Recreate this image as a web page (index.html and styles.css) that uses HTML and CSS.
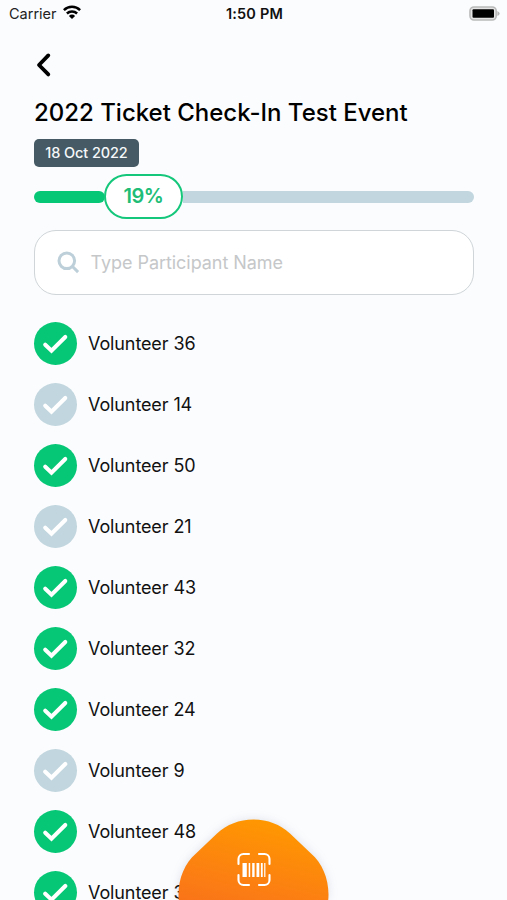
FILE: index.html
```html
<!DOCTYPE html>
<html lang="en">
<head>
<meta charset="utf-8">
<meta name="viewport" content="width=device-width, initial-scale=1">
<title>Ticket Check-In</title>
<link rel="stylesheet" href="styles.css">
</head>
<body>
<svg class="defs" width="0" height="0" aria-hidden="true">
  <symbol id="check" viewBox="0 0 44 44"><path d="M11.5 23.2 17.9 29.3 32 15.4" fill="none" stroke="#fff" stroke-width="4.2" stroke-linecap="round" stroke-linejoin="miter"/></symbol>
</svg>
<div class="screen">
  <header class="status">
    <div class="carrier"><span class="carrier-name">Carrier</span>
      <svg width="18" height="14" viewBox="0 0 18 14" fill="none" stroke="#000" stroke-width="2.5"><path d="M.9 5.1a11.7 11.7 0 0 1 16.2 0"/><path d="M3.9 8.5a7.4 7.4 0 0 1 10.2 0"/><path d="M9 14 5.9 10.9a4.4 4.4 0 0 1 6.2 0z" fill="#000" stroke="none"/></svg>
    </div>
    <span class="time">1:50 PM</span>
    <svg class="battery" width="31" height="15" viewBox="0 0 31 15"><rect x="1" y="1" width="26.2" height="13" rx="4" fill="#e4e4e4" stroke="#b9b9b9" stroke-width="1.6"/><rect x="3.500" y="3.200" width="21.500" height="8.600" rx="1"/><path d="M28.4 5q2.2 1 2.2 2.5t-2.2 2.5z" fill="#b5b5b5"/></svg>
  </header>
  <main class="content">
    <button class="back" aria-label="Back"><svg width="18" height="26" viewBox="0 0 18 26"><path d="M14.300 3.4 5 13l9.300 9.4" fill="none" stroke="#000" stroke-width="3.8" stroke-linecap="round" stroke-linejoin="round"/></svg></button>
    <h1 class="title">2022 Ticket Check-In Test Event</h1>
    <div class="date">18 Oct 2022</div>
    <div class="progress"><div class="done"></div><div class="percent">19%</div><div class="rest"></div></div>
    <div class="search">
      <svg width="23" height="23" viewBox="0 0 23 23" fill="none" stroke="#bdd0d9" stroke-width="3"><circle cx="9.8" cy="9.8" r="7.8"/><path d="m15.5 15.5 5.6 5.6"/></svg>
      <span class="placeholder">Type Participant Name</span>
    </div>
    <ul class="people">
      <li><svg class="mark in"><use href="#check"/></svg><span>Volunteer 36</span></li>
      <li><svg class="mark"><use href="#check"/></svg><span>Volunteer 14</span></li>
      <li><svg class="mark in"><use href="#check"/></svg><span>Volunteer 50</span></li>
      <li><svg class="mark"><use href="#check"/></svg><span>Volunteer 21</span></li>
      <li><svg class="mark in"><use href="#check"/></svg><span>Volunteer 43</span></li>
      <li><svg class="mark in"><use href="#check"/></svg><span>Volunteer 32</span></li>
      <li><svg class="mark in"><use href="#check"/></svg><span>Volunteer 24</span></li>
      <li><svg class="mark"><use href="#check"/></svg><span>Volunteer 9</span></li>
      <li><svg class="mark in"><use href="#check"/></svg><span>Volunteer 48</span></li>
      <li><svg class="mark in"><use href="#check"/></svg><span>Volunteer 3</span></li>
    </ul>
  </main>
  <button class="scan" aria-label="Scan ticket">
    <svg width="170" height="90" viewBox="0 0 170 90">
      <defs><linearGradient id="glow" x1=".62" y1="0" x2=".38" y2="1"><stop offset="0" stop-color="#ff9800"/><stop offset=".52" stop-color="#fb7b15"/><stop offset="1" stop-color="#f4601f"/></linearGradient></defs>
      <path d="M84.500 9.500C99 9.500 111 14.500 121 23.500L142 43.500C153 53 159.500 68 159.500 84.500S153 116 142 125.500L121 145.500C102 164 67 164 48 145.500L27 125.500C16 116 9.500 101 9.500 84.500S16 53 27 43.500L48 23.500C58 14.500 70 9.500 84.500 9.500Z" fill="url(#glow)"/>
      <g fill="none" stroke="#fff" stroke-width="2.1" stroke-linecap="round"><path d="M69.500 54V49a5 5 0 0 1 5-5H80M90 44h5.500a5 5 0 0 1 5 5v5M100.500 65v5a5 5 0 0 1-5 5H90M80 75h-5.500a5 5 0 0 1-5-5v-5"/></g>
      <path fill="#fff" d="M73.500 53h4.300v14h-4.300zM79.700 53h1.500v14h-1.500zM83.200 53h2.400v14h-2.400zM87.500 53h2.800v14h-2.800zM91.900 53h1.800v14h-1.800zM95.200 53h1.200v14h-1.200z"/>
    </svg>
  </button>
</div>
</body>
</html>
```
FILE: styles.css
```css
* { box-sizing: border-box; }
body { margin: 0; background: #fbfcfe; font-family: Inter, "Liberation Sans", sans-serif; color: #111; }
button { border: 0; padding: 0; background: none; display: block; }
.defs { position: absolute; }
.screen { position: relative; height: 900px; overflow: hidden; }
.status { display: grid; grid-template-columns: 1fr auto 1fr; align-items: center; height: 27px; padding: 0 7px 0 9px; }
.carrier { display: flex; align-items: center; gap: 6px; font-size: 14.5px; color: #222; }
.carrier svg { margin-top: -3px; }
.time { font-size: 14.5px; font-weight: 600; letter-spacing: .2px; }
.battery { justify-self: end; margin-top: -1px; }
.content { padding: 0 33px 0 34px; }
.back { margin-top: 25px; height: 26px; }
.back svg { display: block; }
.title { margin: 19px 0 0; height: 32px; line-height: 32px; font-size: 24px; font-weight: 500; letter-spacing: -.01px; white-space: nowrap; color: #000; }
.date { margin-top: 10px; width: 105px; height: 28px; line-height: 28px; border-radius: 5px; background: #455a64; color: #f5f8fa; font-size: 14.5px; font-weight: 500; letter-spacing: -.1px; text-align: center; white-space: nowrap; }
.progress { display: flex; align-items: center; height: 45px; margin-top: 7px; }
.done { width: 71px; height: 12px; border-radius: 6px; background: #05c775; }
.percent { width: 79px; height: 45px; margin-left: -1px; border: 2.5px solid #15c77b; border-radius: 23px; background: #fff; color: #20bd77; font-size: 20px; font-weight: 600; letter-spacing: -.5px; line-height: 41px; text-align: center; }
.rest { flex: 1; height: 12px; border-radius: 0 6px 6px 0; background: #c1d6de; }
.search { display: flex; align-items: center; gap: 10.500px; height: 65px; margin-top: 11px; padding-left: 22px; border: 1.5px solid #cfd5d8; border-radius: 22px; background: #fff; }
.placeholder { color: #c5c7c9; font-size: 18px; letter-spacing: -.05px; }
.people { list-style: none; margin: 17.500px 0 0; padding: 0; }
.people li { display: flex; align-items: center; gap: 11px; height: 61.100px; font-size: 18px; letter-spacing: -.11px; }
.mark { width: 43px; height: 43px; border-radius: 50%; background: #c1d6de; }
.mark.in { background: #05c775; }
.scan { position: absolute; left: 169px; bottom: 0; height: 90px; filter: drop-shadow(0 0 5px rgba(60, 80, 110, .16)); }
.scan svg { display: block; overflow: hidden; }
```
